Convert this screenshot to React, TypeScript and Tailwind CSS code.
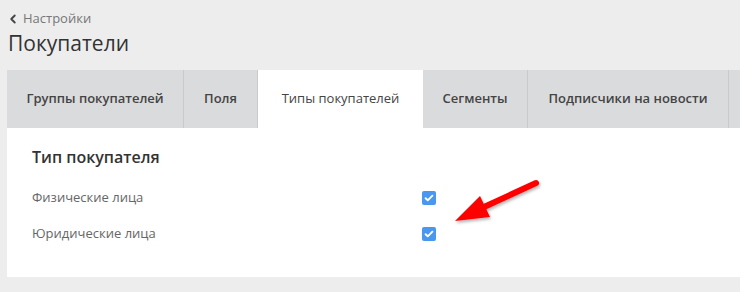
import { ChevronLeft } from 'lucide-react'

const tabs = [
  { label: 'Группы покупателей', w: 'w-[177px]' },
  { label: 'Поля', w: 'w-[74px]' },
  { label: 'Типы покупателей', w: 'w-[165px]', active: true },
  { label: 'Сегменты', w: 'w-[105px]' },
  { label: 'Подписчики на новости', w: 'w-[201px]' },
  { label: '', w: 'w-[120px]' },
]

const rows = ['Физические лица', 'Юридические лица']

function Check() {
  return (
    <span className="flex h-[14px] w-[14px] items-center justify-center rounded-[2px] bg-[#4a97f0]">
      <svg width="10" height="10" viewBox="0 0 10 10" fill="none">
        <path d="M1.6 5.2l2.2 2.1 4.6-4.6" stroke="white" strokeWidth="1.9" strokeLinecap="round" strokeLinejoin="round" />
      </svg>
    </span>
  )
}

function Arrow() {
  return (
    <svg className="absolute left-[448px] top-[176px]" width="100" height="56" viewBox="0 0 100 56" fill="none">
      <defs>
        <filter id="sh" x="-20%" y="-20%" width="140%" height="160%">
          <feDropShadow dx="1" dy="2" stdDeviation="1.5" floodColor="#000" floodOpacity="0.3" />
        </filter>
      </defs>
      <g filter="url(#sh)">
        <line x1="88" y1="7" x2="36" y2="31" stroke="#ff0000" strokeWidth="6" strokeLinecap="round" />
        <polygon points="7,45 32,20 42,41" fill="#ff0000" />
      </g>
    </svg>
  )
}

export default function App() {
  return (
    <div className="relative h-[292px] w-[740px] overflow-hidden bg-[#ededed] font-['Open_Sans',sans-serif]">
      <div className="px-2 pt-[9px]">
        <a className="flex items-center gap-[3px] text-[13px] text-[#777]">
          <ChevronLeft size={14} strokeWidth={3.2} className="-ml-[2px] text-[#444]" />
          Настройки
        </a>
        <h1 className="-mt-[1px] text-[21px] leading-[30px] text-[#333]">Покупатели</h1>
      </div>

      <div className="ml-[7px] mt-[12px]">
        <div className="flex h-[58px]">
          {tabs.map((t, i) => (
            <div
              key={i}
              className={
                t.active
                  ? `${t.w} flex shrink-0 items-center justify-center bg-white text-[13px] text-[#444]`
                  : `${t.w} flex shrink-0 items-center justify-center border-r border-[#c9cacc] bg-[#dadbdd] text-[13px] font-semibold text-[#444]`
              }
            >
              {t.label}
            </div>
          ))}
        </div>
        <div className="h-[149px] bg-white px-[25px] pt-[19px]">
          <h2 className="text-[16px] font-semibold leading-[20px] text-[#333]">Тип покупателя</h2>
          <div className="mt-[24px] flex flex-col gap-[21px]">
            {rows.map((r) => (
              <div key={r} className="flex h-[15px] items-center">
                <span className="w-[390px] text-[13px] text-[#666]">{r}</span>
                <Check />
              </div>
            ))}
          </div>
        </div>
      </div>

      <Arrow />
    </div>
  )
}
